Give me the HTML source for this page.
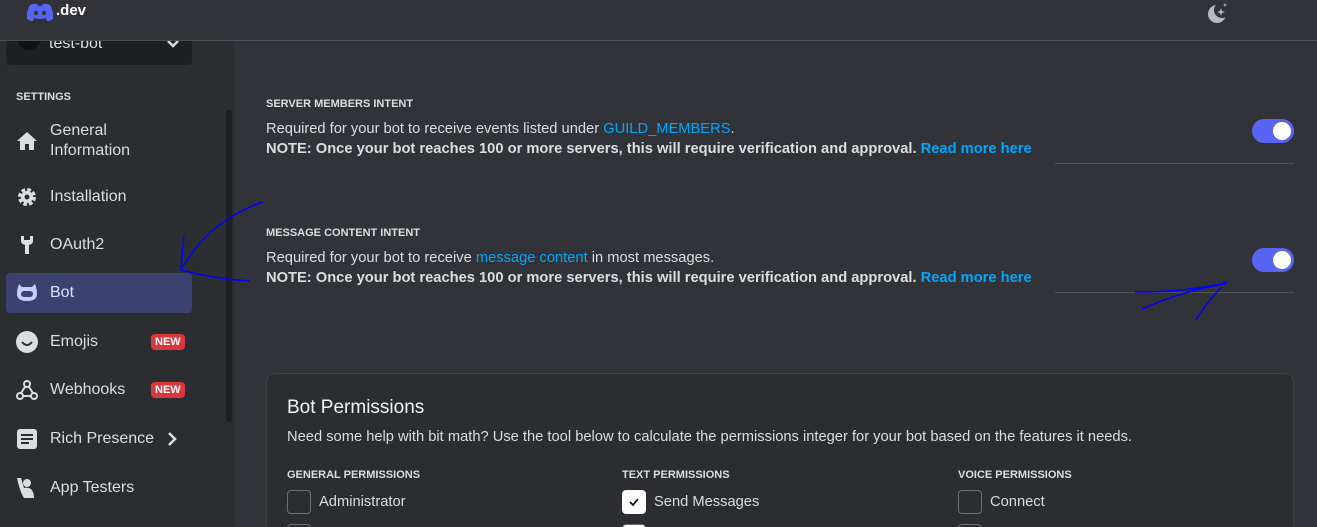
<!DOCTYPE html>
<html><head><style>
*{box-sizing:border-box;margin:0;padding:0}
html,body{width:1317px;height:527px;overflow:hidden}
body{background:#313338;font-family:"Liberation Sans",sans-serif;color:#dbdee1;position:relative}
.top{position:absolute;left:0;top:0;width:1317px;height:41px;border-bottom:1px solid #4e5058;background:#313338;z-index:5}
.side{position:absolute;left:0;top:42px;width:234px;height:485px;background:#2b2d31}
.sb{position:absolute;left:226px;top:110px;width:6px;height:312px;background:#1e1f22;border-radius:3px}
.acct{position:absolute;left:6px;top:30px;width:186px;height:35px;background:#1e1f22;border-radius:4px;overflow:hidden}
.item{position:absolute;left:6px;width:186px;height:40px;display:flex;align-items:center;font-size:16px;color:#dbdee1}
.item svg{position:absolute;left:9px}
.item span.t{position:absolute;left:44px}
.new{position:absolute;left:145px;background:#da373c;color:#fff;font-size:11px;font-weight:bold;padding:2px 4px;border-radius:4px}
.h{font-size:11px;font-weight:bold;color:#dbdee1;position:absolute}
.p{font-size:14.7px;position:absolute;color:#dbdee1;white-space:nowrap}
a{color:#00a8fc;text-decoration:none}
.tog{position:absolute;left:1252px;width:42px;height:24px;border-radius:12px;background:#5865f2}
.tog::after{content:"";position:absolute;right:3px;top:3px;width:18px;height:18px;border-radius:50%;background:#fff}
.line{position:absolute;left:1055px;width:239px;height:1px;background:#4e5058}
.card{position:absolute;left:266px;top:373px;width:1028px;height:170px;background:#2b2d31;border:1px solid #3f4147;border-radius:8px}
.cb{position:absolute;width:24px;height:24px;border:1px solid #6d6f78;border-radius:4px}
</style></head><body>
<div class="top">
<svg style="position:absolute;left:25px;top:3px" width="30" height="18" viewBox="0 0 30 18"><path d="M5 2 Q10 0 12 1 L13 3 Q15 2.6 17 3 L18 1 Q21 0 25 2 Q29 9 28 16 Q25 18 22 18 L21 15 Q15 17 9 15 L8 18 Q5 18 2 16 Q1 9 5 2Z" fill="#5865f2"/><circle cx="11" cy="10" r="2.2" fill="#313338"/><circle cx="19" cy="10" r="2.2" fill="#313338"/></svg>
<span style="position:absolute;left:56px;top:2px;font-weight:bold;font-size:15px;color:#fff">.dev</span>
<svg style="position:absolute;left:1206px;top:2px" width="24" height="22" viewBox="0 0 24 22"><circle cx="11" cy="12" r="9" fill="#b5bac1"/><circle cx="16" cy="8" r="8" fill="#313338"/><path d="M15 6 l1 3 l3 1 l-3 1 l-1 3 l-1-3 l-3-1 l3-1z M19 1 l.6 1.4 l1.4.6 l-1.4.6 l-.6 1.4 l-.6-1.4 l-1.4-.6 l1.4-.6z" fill="#b5bac1"/></svg>
</div>
<div class="side"></div>
<div class="acct"><div style="position:absolute;left:11px;top:0;width:24px;height:20px;border-radius:0 0 12px 12px;background:#111214"></div><span style="position:absolute;left:43px;top:5px;font-size:16px">test-bot</span><svg style="position:absolute;left:160px;top:9px" width="14" height="10" viewBox="0 0 14 10"><path d="M2 2 L7 7 L12 2" stroke="#dbdee1" stroke-width="2.5" fill="none"/></svg></div>
<div class="sb"></div>
<div class="h" style="left:16px;top:91px">SETTINGS</div>
<div class="item" style="top:121px"><svg width="24" height="24" viewBox="0 0 24 24"><path d="M12 3 L22 12 H19 V21 H14 V15 H10 V21 H5 V12 H2Z" fill="#dbdee1"/></svg><span class="t" style="line-height:20px;top:0">General<br>Information</span></div>
<div class="item" style="top:177px"><svg width="24" height="24" viewBox="0 0 24 24"><circle cx="12" cy="12" r="7" fill="none" stroke="#dbdee1" stroke-width="4" stroke-dasharray="3.5 2"/><circle cx="12" cy="12" r="6" fill="#dbdee1"/><circle cx="12" cy="12" r="2.5" fill="#2b2d31"/></svg><span class="t">Installation</span></div>
<div class="item" style="top:225px"><svg width="24" height="24" viewBox="0 0 24 24"><path d="M6 3 V8 Q6 11 10 12 V21 H14 V12 Q18 11 18 8 V3 L15 3 V7 H9 V3Z" fill="#dbdee1"/></svg><span class="t">OAuth2</span></div>
<div class="item" style="top:273px;background:#3c4270;border-radius:4px"><svg width="24" height="24" viewBox="0 0 24 24"><path d="M4 3 L7 6 H17 L20 3 L21 6 Q22 9 22 13 Q22 20 12 20 Q2 20 2 13 Q2 9 3 6Z" fill="#c9cdfb"/><rect x="6" y="10" width="12" height="6" rx="3" fill="#3c4270"/></svg><span class="t" style="color:#dee0fc">Bot</span></div>
<div class="item" style="top:322px"><svg width="24" height="24" viewBox="0 0 24 24"><circle cx="12" cy="12" r="11" fill="#dbdee1"/><path d="M7 12 Q12 18 17 12" stroke="#2b2d31" stroke-width="2" fill="none"/></svg><span class="t">Emojis</span><span class="new">NEW</span></div>
<div class="item" style="top:370px"><svg width="24" height="24" viewBox="0 0 24 24"><g fill="none" stroke="#dbdee1" stroke-width="2"><circle cx="12" cy="6" r="3"/><circle cx="5" cy="18" r="3"/><circle cx="19" cy="18" r="3"/><path d="M10 9 L6 15 M14 9 L18 15 M8 18 H16"/></g></svg><span class="t">Webhooks</span><span class="new">NEW</span></div>
<div class="item" style="top:419px"><svg width="24" height="24" viewBox="0 0 24 24"><rect x="2" y="2" width="20" height="20" rx="3" fill="#dbdee1"/><path d="M6 8H18M6 12H18M6 16H14" stroke="#2b2d31" stroke-width="2"/></svg><span class="t">Rich Presence</span><svg style="left:160px" width="12" height="16" viewBox="0 0 12 16"><path d="M3 2 L9 8 L3 14" stroke="#dbdee1" stroke-width="2.5" fill="none"/></svg></div>
<div class="item" style="top:468px"><svg width="24" height="24" viewBox="0 0 24 24"><circle cx="12" cy="7" r="4" fill="#dbdee1"/><path d="M2 2 L6 2 L9 12 Q13 11 16 13 Q19 16 19 22 H9 Q5 16 2 2Z" fill="#dbdee1"/></svg><span class="t">App Testers</span></div>

<div class="h" style="left:266px;top:98px">SERVER MEMBERS INTENT</div>
<div class="p" style="left:266px;top:121px">Required for your bot to receive events listed under <a>GUILD_MEMBERS</a>.</div>
<div class="p" style="left:266px;top:141px;font-weight:bold">NOTE: Once your bot reaches 100 or more servers, this will require verification and approval. <a>Read more here</a></div>
<div class="tog" style="top:119px"></div>
<div class="line" style="top:163px"></div>
<div class="h" style="left:266px;top:227px">MESSAGE CONTENT INTENT</div>
<div class="p" style="left:266px;top:250px">Required for your bot to receive <a>message content</a> in most messages.</div>
<div class="p" style="left:266px;top:270px;font-weight:bold">NOTE: Once your bot reaches 100 or more servers, this will require verification and approval. <a>Read more here</a></div>
<div class="tog" style="top:248px"></div>
<div class="line" style="top:292px"></div>

<div class="card" style="height:160px">
<div style="position:absolute;left:20px;top:23px;font-size:19px;color:#f2f3f5">Bot Permissions</div>
<div class="p" style="left:20px;top:55px">Need some help with bit math? Use the tool below to calculate the permissions integer for your bot based on the features it needs.</div>
<div class="h" style="left:20px;top:95px">GENERAL PERMISSIONS</div>
<div class="h" style="left:355px;top:95px">TEXT PERMISSIONS</div>
<div class="h" style="left:691px;top:95px">VOICE PERMISSIONS</div>
<div class="cb" style="left:20px;top:116px"></div><div class="p" style="left:52px;top:120px">Administrator</div>
<div class="cb" style="left:355px;top:116px;background:#fff;border-color:#fff"><svg width="22" height="22" viewBox="0 0 22 22"><path d="M7 11 L10 14 L15 8" stroke="#000" stroke-width="1.6" fill="none"/></svg></div><div class="p" style="left:387px;top:120px">Send Messages</div>
<div class="cb" style="left:691px;top:116px"></div><div class="p" style="left:723px;top:120px">Connect</div>
<div class="cb" style="left:20px;top:150px"></div><div class="cb" style="left:355px;top:150px;background:#fff"></div><div class="cb" style="left:691px;top:150px"></div>
</div>

<svg style="position:absolute;left:0;top:0" width="1317" height="527"><g fill="none" stroke="#0000ff" stroke-width="1.5"><path d="M263 202 Q210 220 182 268"/><path d="M184 236 Q182 255 181 270 Q215 279 250 281"/><path d="M1135 292 Q1190 292 1228 282"/><path d="M1142 309 Q1185 290 1225 284"/><path d="M1196 320 Q1210 298 1222 287"/></g></svg>
</body></html>
